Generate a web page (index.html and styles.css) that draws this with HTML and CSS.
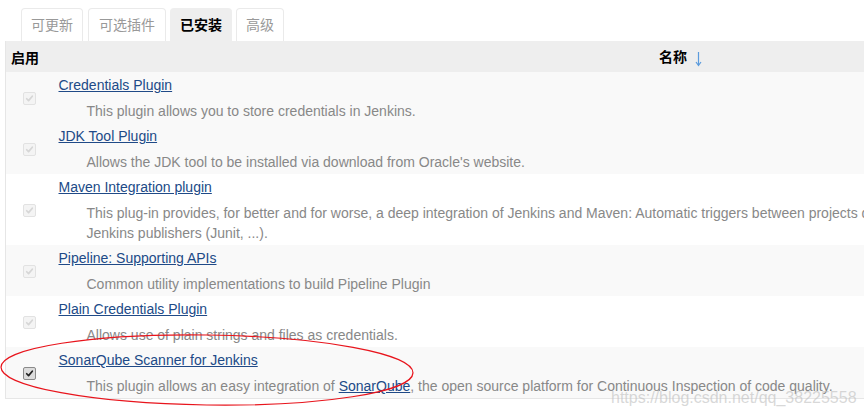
FILE: index.html
```html
<!DOCTYPE html>
<html lang="zh">
<head>
<meta charset="utf-8">
<title>插件管理</title>
<link rel="stylesheet" href="styles.css">
</head>
<body>
<div class="page">
  <div class="tabs">
    <div class="tab">可更新</div>
    <div class="tab wide">可选插件</div>
    <div class="tab active">已安装</div>
    <div class="tab">高级</div>
  </div>
  <table class="plugins">
    <colgroup><col class="col-enable"><col class="col-name"></colgroup>
    <thead>
      <tr><th class="th-enable">启用</th><th class="th-name">名称 <svg class="sort" viewBox="0 0 7 16" width="7" height="16"><path d="M3.5 1 V14 M1 11 L3.5 14.5 L6 11" /></svg></th></tr>
    </thead>
    <tbody>
      <tr class="shade">
        <td class="enable"><span class="cb disabled"><svg viewBox="0 0 13 13"><path d="M3.2 6.8 L5.4 9 L9.8 3.8" /></svg></span></td>
        <td class="name"><div class="title"><a href="#">Credentials Plugin</a></div><div class="desc">This plugin allows you to store credentials in Jenkins.</div></td>
      </tr>
      <tr class="shade">
        <td class="enable"><span class="cb disabled"><svg viewBox="0 0 13 13"><path d="M3.2 6.8 L5.4 9 L9.8 3.8" /></svg></span></td>
        <td class="name"><div class="title"><a href="#">JDK Tool Plugin</a></div><div class="desc">Allows the JDK tool to be installed via download from Oracle's website.</div></td>
      </tr>
      <tr>
        <td class="enable"><span class="cb disabled"><svg viewBox="0 0 13 13"><path d="M3.2 6.8 L5.4 9 L9.8 3.8" /></svg></span></td>
        <td class="name"><div class="title"><a href="#">Maven Integration plugin</a></div><div class="desc">This plug-in provides, for better and for worse, a deep integration of Jenkins and Maven: Automatic triggers between projects depending on SNAPSHOTs, automated configuration of various<br>Jenkins publishers (Junit, ...).</div></td>
      </tr>
      <tr class="shade">
        <td class="enable"><span class="cb disabled"><svg viewBox="0 0 13 13"><path d="M3.2 6.8 L5.4 9 L9.8 3.8" /></svg></span></td>
        <td class="name"><div class="title"><a href="#">Pipeline: Supporting APIs</a></div><div class="desc">Common utility implementations to build Pipeline Plugin</div></td>
      </tr>
      <tr>
        <td class="enable"><span class="cb disabled"><svg viewBox="0 0 13 13"><path d="M3.2 6.8 L5.4 9 L9.8 3.8" /></svg></span></td>
        <td class="name"><div class="title"><a href="#">Plain Credentials Plugin</a></div><div class="desc">Allows use of plain strings and files as credentials.</div></td>
      </tr>
      <tr class="shade">
        <td class="enable"><span class="cb on"><svg viewBox="0 0 13 13"><path d="M3.2 6.8 L5.4 9 L9.8 3.8" /></svg></span></td>
        <td class="name"><div class="title"><a href="#">SonarQube Scanner for Jenkins</a></div><div class="desc">This plugin allows an easy integration of <a href="#">SonarQube</a>, the open source platform for Continuous Inspection of code quality.</div></td>
      </tr>
    </tbody>
  </table>
</div>
<svg class="annotation" width="864" height="418" viewBox="0 0 864 418">
  <ellipse cx="207" cy="370" rx="206" ry="35" transform="rotate(0.8 207 370)" />
</svg>
<div class="watermark">https://blog.csdn.net/qq_38225558</div>
</body>
</html>
```
FILE: styles.css
```css
html, body {
  margin: 0;
  padding: 0;
  background: #fff;
}
body {
  width: 864px;
  height: 418px;
  overflow: hidden;
  position: relative;
  font-family: "Liberation Sans", Arial, "Noto Sans CJK SC", sans-serif;
  font-size: 14px;
  color: #333;
}
.page {
  padding: 8px 0 0 5px;
}
.tabs {
  display: flex;
  gap: 4px;
  margin-left: 16px;
}
.tab {
  font-family: "Liberation Sans", "Noto Sans CJK SC", sans-serif;
  border: 1px solid #eaeaea;
  border-bottom: none;
  border-radius: 4px 4px 0 0;
  padding: 0 9px;
  height: 32px;
  line-height: 32px;
  color: #999;
  background: #fff;
}
.tab:first-child {
  margin-right: 1px;
}
.tab.wide {
  padding: 0 10px;
}
.tab.active {
  background: #eeeeee;
  border-color: #eeeeee;
  color: #000;
  font-weight: bold;
}
.plugins {
  border-collapse: collapse;
  table-layout: fixed;
  width: 1302px;
  border-left: 1px solid #e6e6e6;
  border-bottom: 1px solid #e6e6e6;
}
.col-enable { width: 48px; }
.col-name { width: 1254px; }
.plugins th {
  background: #eeeeee;
  height: 31px;
  padding: 0;
  font-family: "Liberation Sans", "Noto Sans CJK SC", sans-serif;
  font-weight: bold;
  color: #000;
}
.th-enable {
  text-align: left;
  padding-left: 5px !important;
}
.th-name {
  text-align: center;
}
.sort {
  vertical-align: -5px;
  margin-left: 4px;
}
.sort path {
  fill: none;
  stroke: #5b9bdd;
  stroke-width: 1.2;
}
.plugins td {
  padding: 0;
}
.plugins tr.shade td {
  background: #f9f9f9;
}
.enable {
  text-align: center;
  vertical-align: middle;
}
.name {
  vertical-align: top;
  padding: 3px 0 2px 5px !important;
}
.title {
  line-height: 20px;
}
.plugins a {
  color: #204a87;
  text-decoration: underline;
}
.desc {
  margin-top: 6px;
  padding-left: 28px;
  line-height: 20px;
  color: #888;
}
.cb {
  display: inline-block;
  box-sizing: border-box;
  width: 13px;
  height: 13px;
  border-radius: 2px;
  vertical-align: middle;
}
.cb svg {
  display: block;
  width: 11px;
  height: 11px;
}
.cb path {
  fill: none;
  stroke-width: 2;
  stroke-linecap: round;
  stroke-linejoin: round;
}
.cb.disabled {
  border: 1px solid #e2e2e2;
  background: #f4f4f4;
}
.cb.disabled path {
  stroke: #d6d6d6;
}
.cb.on {
  border: 1px solid #8a8a8a;
  background: #dcdcdc;
}
.cb.on path {
  stroke: #222;
}
.annotation {
  position: absolute;
  left: 0;
  top: 0;
  pointer-events: none;
}
.annotation ellipse {
  fill: none;
  stroke: #e8141c;
  stroke-width: 1.2;
}
.watermark {
  position: absolute;
  left: 611px;
  top: 389px;
  font-family: "Liberation Sans", Arial, sans-serif;
  font-size: 16px;
  color: rgba(190, 190, 190, 0.6);
  white-space: nowrap;
}
```
